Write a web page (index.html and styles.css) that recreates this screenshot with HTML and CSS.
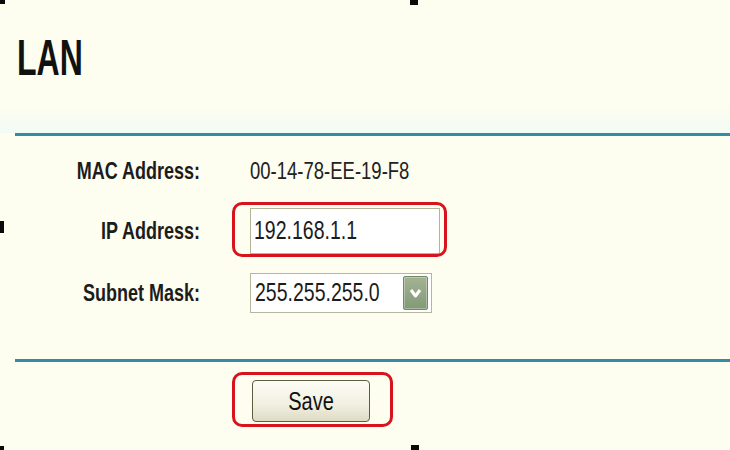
FILE: index.html
```html
<!DOCTYPE html>
<html lang="en">
  <head>
    <meta charset="UTF-8" />
    <meta name="viewport" content="width=device-width, initial-scale=1.0" />
    <title>LAN</title>
    <link rel="stylesheet" href="styles.css">
  </head>
  <body>
    <div class="page">
      <!-- frame handles -->
      <div class="handle handle-tl"></div>
      <div class="handle handle-tm"></div>
      <div class="handle handle-ml"></div>
      <div class="handle handle-bl"></div>
      <div class="handle handle-bm"></div>

      <header class="title-bar">
        <h1 class="title"><span class="tall">LAN</span></h1>
      </header>
      <hr class="rule" />

      <form class="settings" onsubmit="return false">
        <label class="label"><span class="tall">MAC Address:</span></label>
        <div class="value"><span class="tall">00-14-78-EE-19-F8</span></div>

        <label class="label" for="ip"><span class="tall">IP Address:</span></label>
        <div class="field-cell">
          <div class="field highlight highlight-ip" id="ip">
            <span class="tall">192.168.1.1</span>
          </div>
        </div>

        <label class="label" for="mask"><span class="tall">Subnet Mask:</span></label>
        <div class="field-cell">
          <div class="select" id="mask">
            <span class="tall">255.255.255.0</span>
            <span class="select-arrow">
              <svg width="13" height="10" viewBox="0 0 13 10">
                <path d="M2 2 L6.5 8 L11 2" fill="none" stroke="#fff" stroke-width="3" stroke-linejoin="round" />
              </svg>
            </span>
          </div>
        </div>
      </form>
      <hr class="rule" />

      <div class="actions">
        <button class="save-btn highlight highlight-save" type="button"><span class="tall">Save</span></button>
      </div>
    </div>
  </body>
</html>
```

FILE: styles.css
```css
body {
  margin: 0;
  background-color: #fdfdf0;
  font-family: "Liberation Sans", Arial, sans-serif;
  color: #1c1c1c;
}
.page {
  position: relative;
  width: 730px;
  height: 450px;
  overflow: hidden;
}
.handle {
  position: absolute;
  background-color: #0a0a0a;
}
.handle-tl {
  left: 0;
  top: 0;
  width: 5px;
  height: 4px;
}
.handle-tm {
  left: 410px;
  top: 0;
  width: 8px;
  height: 5px;
}
.handle-ml {
  left: 0;
  top: 221px;
  width: 4px;
  height: 12px;
}
.handle-bl {
  left: 0;
  top: 446px;
  width: 4px;
  height: 4px;
}
.handle-bm {
  left: 411px;
  top: 445px;
  width: 8px;
  height: 5px;
}
.tall {
  display: inline-block;
  transform: scaleY(1.3);
}
.title-bar {
  height: 133px;
  box-sizing: border-box;
  padding: 40px 0 0 17px;
  background: linear-gradient(#fdfdf0 80%, #f1fbf5);
}
.title {
  margin: 0;
  font-size: 32px;
  line-height: 36px;
  font-weight: bold;
  color: #111;
}
.title .tall {
  transform: scaleY(1.56);
}
.rule {
  margin: 0 0 0 15px;
  height: 3px;
  border: none;
  background-color: #368aa3;
}
.settings {
  display: grid;
  grid-template-columns: 200px auto;
  grid-template-rows: 60px 60px 64px;
  column-gap: 50px;
  align-items: center;
  padding: 5px 0 34px;
}
.label {
  text-align: right;
  font-size: 18px;
  line-height: 1;
  font-weight: bold;
}
.value {
  font-size: 18.5px;
  line-height: 1;
  color: #222;
}
.field {
  width: 190px;
  height: 46px;
  box-sizing: border-box;
  padding-left: 3px;
  display: flex;
  align-items: center;
  border: 1px solid #b3b498;
  background-color: #fff;
  font-size: 19.5px;
  line-height: 1;
}
.select {
  width: 182px;
  height: 40px;
  box-sizing: border-box;
  padding: 0 3px 0 4px;
  display: flex;
  align-items: center;
  justify-content: space-between;
  border: 1px solid #b5b69d;
  background-color: #fff;
  font-size: 19.5px;
  line-height: 1;
}
.select-arrow {
  width: 25px;
  height: 34px;
  box-sizing: border-box;
  display: flex;
  align-items: center;
  justify-content: center;
  border: 1px solid #728a66;
  border-radius: 2px;
  background: linear-gradient(#a4b394, #819a75);
  box-shadow: inset 0 0 0 1px rgba(255, 255, 255, 0.3);
}
.actions {
  padding: 18px 0 0 252px;
}
.save-btn {
  width: 118px;
  height: 42px;
  border: 1px solid #5c5c42;
  border-radius: 4px;
  background: linear-gradient(#fdfdf7, #f1efe0 60%, #dedbc4);
  font-family: "Liberation Sans", Arial, sans-serif;
  font-size: 20px;
  line-height: 1;
  color: #111;
  padding: 0;
}
.highlight {
  position: relative;
}
.highlight::after {
  content: "";
  position: absolute;
  border: 3px solid #d7141d;
  border-radius: 10px;
  pointer-events: none;
}
.highlight-ip::after {
  top: -7px;
  right: -8px;
  bottom: -4px;
  left: -19px;
}
.highlight-save::after {
  top: -9px;
  right: -24px;
  bottom: -6px;
  left: -21px;
}
```
